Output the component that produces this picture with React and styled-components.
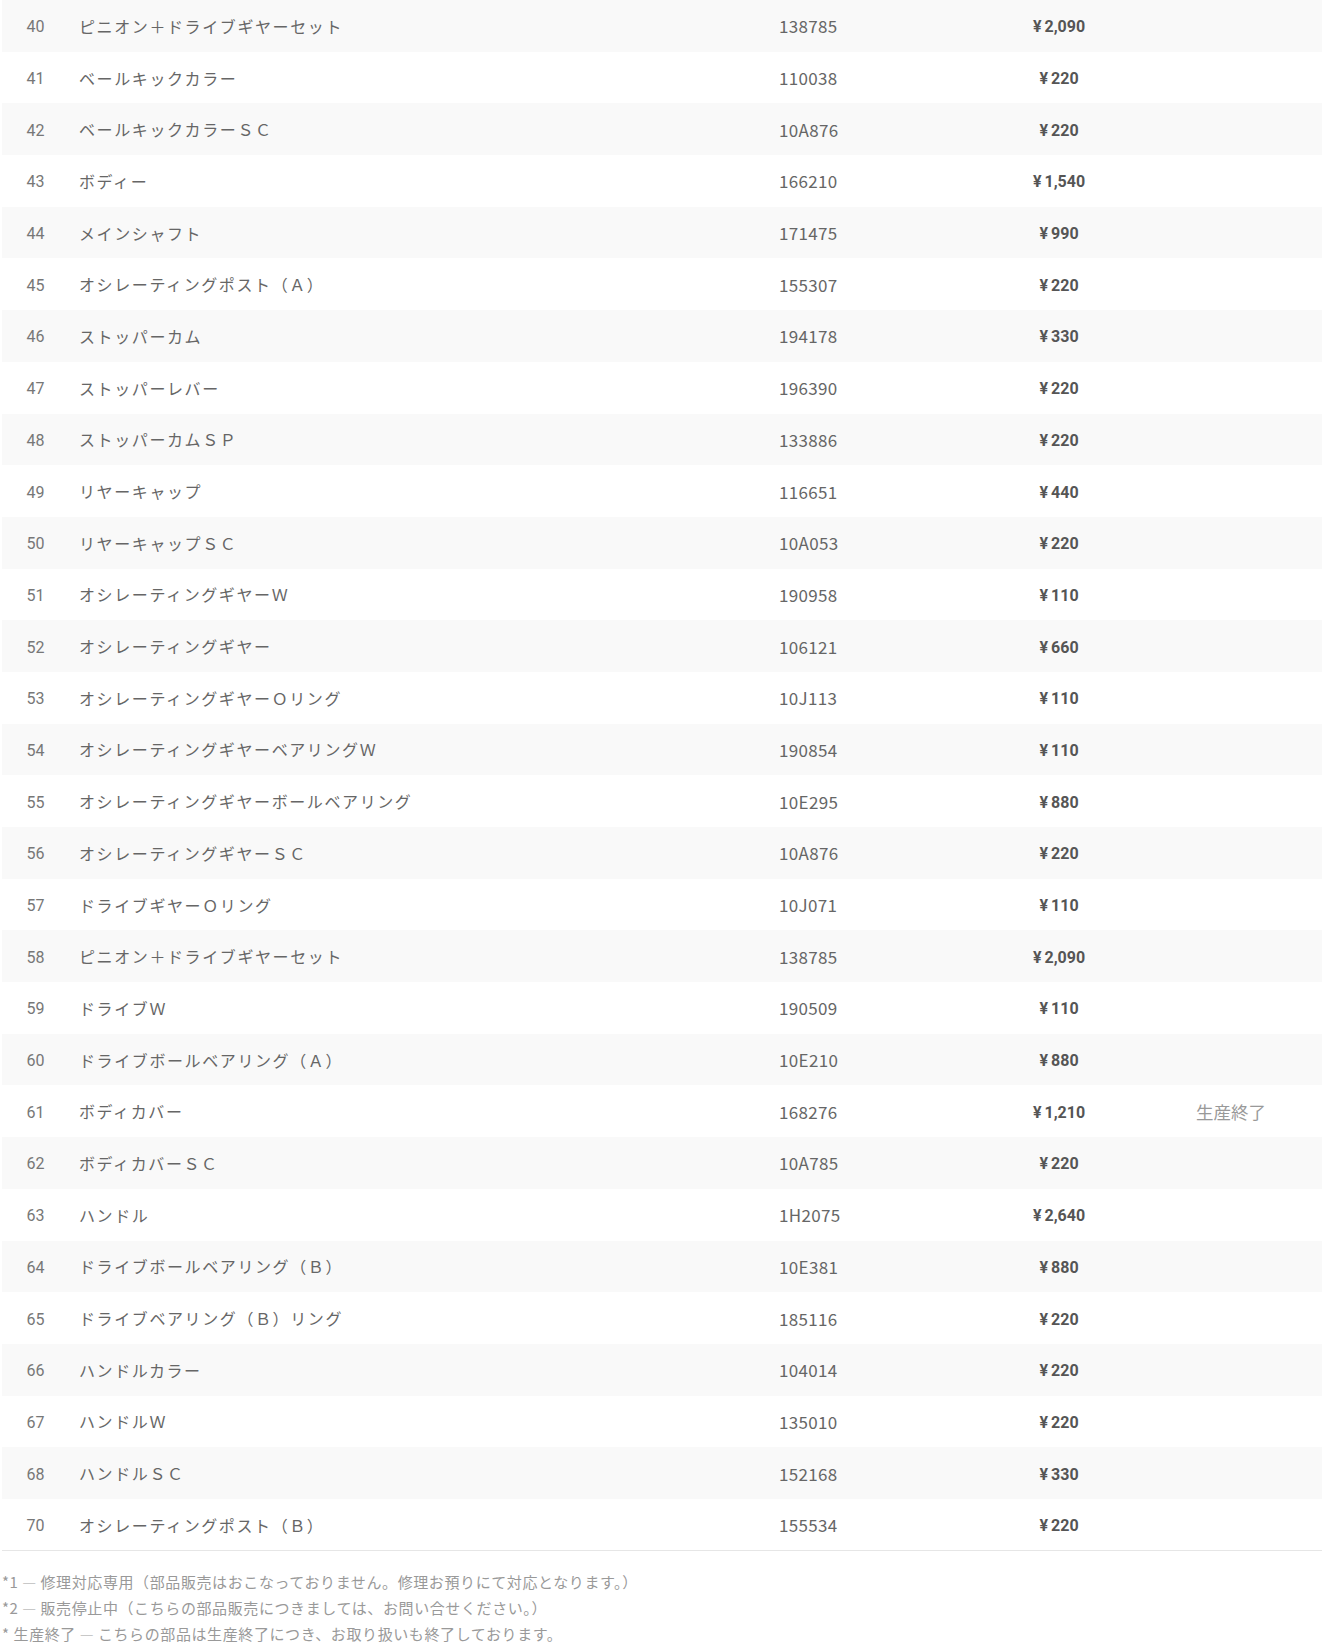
import React from 'react';
import styled, { createGlobalStyle } from 'styled-components';

const parts = [
  ['40', 'ピニオン＋ドライブギヤーセット', '138785', '2,090'],
  ['41', 'ベールキックカラー', '110038', '220'],
  ['42', 'ベールキックカラーＳＣ', '10A876', '220'],
  ['43', 'ボディー', '166210', '1,540'],
  ['44', 'メインシャフト', '171475', '990'],
  ['45', 'オシレーティングポスト（Ａ）', '155307', '220'],
  ['46', 'ストッパーカム', '194178', '330'],
  ['47', 'ストッパーレバー', '196390', '220'],
  ['48', 'ストッパーカムＳＰ', '133886', '220'],
  ['49', 'リヤーキャップ', '116651', '440'],
  ['50', 'リヤーキャップＳＣ', '10A053', '220'],
  ['51', 'オシレーティングギヤーＷ', '190958', '110'],
  ['52', 'オシレーティングギヤー', '106121', '660'],
  ['53', 'オシレーティングギヤーＯリング', '10J113', '110'],
  ['54', 'オシレーティングギヤーベアリングＷ', '190854', '110'],
  ['55', 'オシレーティングギヤーボールベアリング', '10E295', '880'],
  ['56', 'オシレーティングギヤーＳＣ', '10A876', '220'],
  ['57', 'ドライブギヤーＯリング', '10J071', '110'],
  ['58', 'ピニオン＋ドライブギヤーセット', '138785', '2,090'],
  ['59', 'ドライブＷ', '190509', '110'],
  ['60', 'ドライブボールベアリング（Ａ）', '10E210', '880'],
  ['61', 'ボディカバー', '168276', '1,210', '生産終了'],
  ['62', 'ボディカバーＳＣ', '10A785', '220'],
  ['63', 'ハンドル', '1H2075', '2,640'],
  ['64', 'ドライブボールベアリング（Ｂ）', '10E381', '880'],
  ['65', 'ドライブベアリング（Ｂ）リング', '185116', '220'],
  ['66', 'ハンドルカラー', '104014', '220'],
  ['67', 'ハンドルＷ', '135010', '220'],
  ['68', 'ハンドルＳＣ', '152168', '330'],
  ['70', 'オシレーティングポスト（Ｂ）', '155534', '220'],
];

const notes = [
  ['*1', '修理対応専用（部品販売はおこなっておりません。修理お預りにて対応となります。）'],
  ['*2', '販売停止中（こちらの部品販売につきましては、お問い合せください。）'],
  ['* 生産終了', 'こちらの部品は生産終了につき、お取り扱いも終了しております。'],
];

const App = () => {
  return (
    <>
      <GlobalStyle />
      <Page>
        <PartsTable>
          <colgroup>
            <col style={{ width: 67 }} />
            <col style={{ width: 700 }} />
            <col style={{ width: 163 }} />
            <col style={{ width: 254 }} />
            <col />
          </colgroup>
          <tbody>
            {parts.map(([no, name, code, price, note], i) => (
              <Row key={i} $striped={i % 2 === 0}>
                <NoCell>{no}</NoCell>
                <NameCell>{name}</NameCell>
                <CodeCell>{code}</CodeCell>
                <PriceCell>
                  <Yen>¥</Yen>
                  {price}
                </PriceCell>
                <NoteCell>{note}</NoteCell>
              </Row>
            ))}
          </tbody>
        </PartsTable>

        <Notes>
          {notes.map(([mark, text]) => (
            <NoteLine key={mark}>
              {mark} <Dash>—</Dash> {text}
            </NoteLine>
          ))}
        </Notes>
      </Page>
    </>
  );
};

const GlobalStyle = createGlobalStyle`
  body {
    margin: 0;
    background: #fff;
    font-family: "Noto Sans CJK JP", "Noto Sans", sans-serif;
    color: #666;
  }
`;

const Page = styled.div`
  width: 1320px;
  padding-left: 2px;
`;

const PartsTable = styled.table`
  width: 100%;
  border-collapse: collapse;
  table-layout: fixed;
  border-bottom: 1px solid #e6e6e6;
`;

const Row = styled.tr`
  height: 51.7px;
  background: ${(p) => (p.$striped ? '#f9f9f9' : '#fff')};
`;

const Cell = styled.td`
  padding: 0 10px;
  vertical-align: middle;
  white-space: nowrap;
`;

const NoCell = styled(Cell)`
  text-align: center;
  font-family: Roboto, "Noto Sans", sans-serif;
  font-size: 16px;
  padding-top: 2px;
  color: #777;
`;

const NameCell = styled(Cell)`
  font-size: 16px;
  letter-spacing: 0.1em;
  color: #666;
`;

const CodeCell = styled(Cell)`
  font-size: 17px;
  letter-spacing: 0.02em;
  color: #666;
`;

const PriceCell = styled(Cell)`
  text-align: center;
  font-family: Roboto, "Noto Sans", sans-serif;
  font-weight: 700;
  font-size: 16px;
  padding-top: 2px;
  color: #555;
`;

const Yen = styled.span`
  margin-right: 3px;
`;

const NoteCell = styled(Cell)`
  font-size: 17.5px;
  color: #999;
`;

const Notes = styled.div`
  padding-top: 18px;
  display: flex;
  flex-direction: column;
`;

const NoteLine = styled.p`
  margin: 0;
  font-size: 15px;
  line-height: 26px;
  letter-spacing: 0.04em;
  color: #999;
`;

const Dash = styled.span`
  color: #c8c8c8;
`;

export default App;
